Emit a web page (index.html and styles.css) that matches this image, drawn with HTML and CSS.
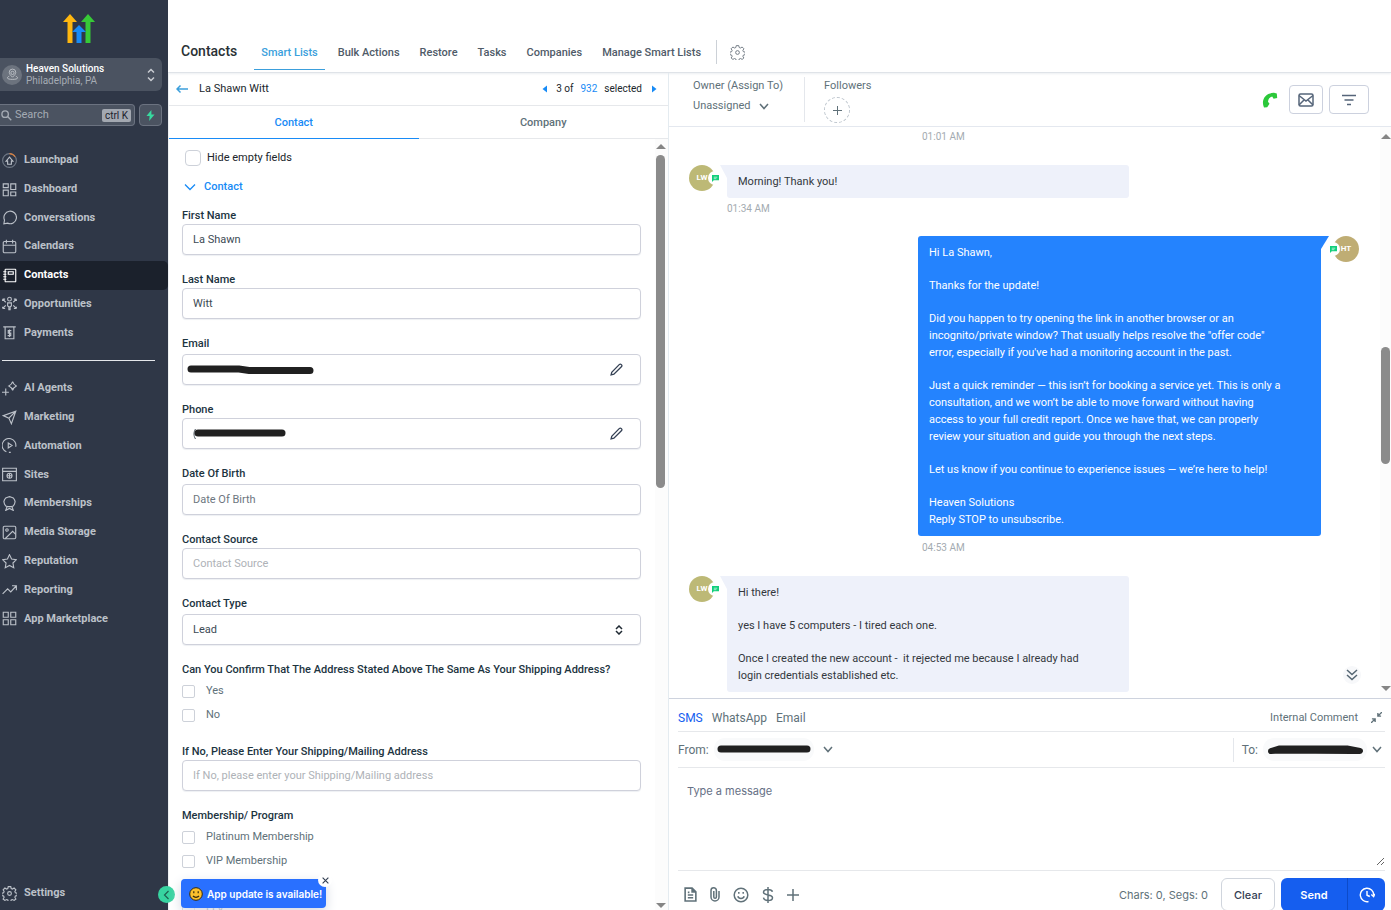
FILE: index.html
```html
<!DOCTYPE html>
<html lang="en">
<head>
<meta charset="utf-8">
<meta name="viewport" content="width=device-width, initial-scale=1">
<title>Contacts</title>
<link rel="stylesheet" href="styles.css">
</head>
<body>
<div class="app">
  <aside class="sidebar">
    <svg class="logo" viewBox="0 0 32 30" width="32" height="30" aria-hidden="true">
      <path fill="#ffb70f" d="M7 0 14 8H9.500V29H4.500V8H0z"/>
      <path fill="#37ca37" d="M25 0 32 8H27.500V29H22.500V8H18z"/>
      <path fill="#188bf6" d="M16 11 23 18H18.500V29H13.500V18H9z"/>
    </svg>
    <button class="location" type="button">
      <span class="location-pin">
        <svg class="line" viewBox="0 0 24 24" width="13" height="13"><circle cx="12" cy="9" r="3"/><path d="M12 17c4-4 6-6 6-9a6 6 0 0 0-12 0c0 3 2 5 6 9zM6 15c-6 3-4 6 6 6s12-3 6-6"/></svg>
      </span>
      <span class="location-text"><b>Heaven Solutions</b><span>Philadelphia, PA</span></span>
      <svg class="line location-sort" viewBox="0 0 10 14" width="10" height="14"><path d="M2 4.500 5 1.500 8 4.500M2 9.500 5 12.500 8 9.500"/></svg>
    </button>
    <div class="search-row">
      <div class="search">
        <svg class="line" viewBox="0 0 12 12" width="11" height="11"><circle cx="4.500" cy="4.500" r="3.500"/><path d="m7.200 7.200 4 4"/></svg>
        <input type="text" placeholder="Search" aria-label="Search">
        <kbd>ctrl K</kbd>
      </div>
      <button class="bolt" type="button" aria-label="Quick actions"><svg viewBox="0 0 10 12" width="9" height="11"><path fill="#37d99f" d="M6 0 0.500 6.500H4L3.500 12 9.500 5H6z"/></svg></button>
    </div>
    <nav class="menu" aria-label="Main">
      <ul class="menu-list menu-primary">
        <li><a href="#"><svg class="line" viewBox="0 0 24 24"><circle cx="12" cy="12" r="11" stroke="#6f7886"/><path stroke="#d97f3d" d="M12 1a11 11 0 0 1 9 5"/><path d="M9 18v-5H6.500L12 6.500 17.500 13H15v5z"/></svg>Launchpad</a></li>
        <li><a href="#"><svg class="line" viewBox="0 0 24 24"><path d="M2 3h8v6H2zM14 3h8v9h-8zM2 13h8v9H2zM14 16h8v6h-8z"/></svg>Dashboard</a></li>
        <li><a href="#"><svg class="line" viewBox="0 0 24 24"><path d="M3 22l1-6a10 10 0 1 1 5 5z"/></svg>Conversations</a></li>
        <li><a href="#"><svg class="line" viewBox="0 0 24 24"><rect x="2" y="4" width="20" height="18" rx="2"/><path d="M2 10h20M7 1v6M17 1v6"/></svg>Calendars</a></li>
        <li><a class="active" href="#"><svg class="line" viewBox="0 0 24 24"><rect x="5" y="2" width="17" height="20" rx="1"/><path d="M10 6h8v4h-8zM2 6h5M2 10h5M2 14h5M2 18h5"/></svg>Contacts</a></li>
        <li><a href="#"><svg class="line" viewBox="0 0 24 24"><circle cx="12" cy="5" r="3"/><path d="M9 11h6v5l-2 1v5h-2v-5l-2-1zM1 5l5 5M1 5h4M1 5v3M23 5l-5 5M23 5h-4M23 5v3M1 20l5-5M1 20h4M1 20v-3M23 20l-5-5M23 20h-4M23 20v-3"/></svg>Opportunities</a></li>
        <li><a href="#"><svg class="line" viewBox="0 0 24 24"><path d="M2 3h20M5 3v19h14V3M15 9h-5v4h4v4H9M12 7v12"/></svg>Payments</a></li>
      </ul>
      <hr>
      <ul class="menu-list menu-secondary">
        <li><a href="#"><svg class="line" viewBox="0 0 24 24"><path d="M17 1c1 4 2 5 6 7-4 2-5 3-6 7-1-4-2-5-6-7 4-2 5-3 6-7zM6 12v11M0 18h11"/></svg>AI Agents</a></li>
        <li><a href="#"><svg class="line" viewBox="0 0 24 24"><path d="M22 2 15 22l-4-9-9-4zM22 2 11 13"/></svg>Marketing</a></li>
        <li><a href="#"><svg class="line" viewBox="0 0 24 24"><path d="M7 22A11 11 0 1 1 22 14M11 23h3M10 8l6 4-6 4z"/></svg>Automation</a></li>
        <li><a href="#"><svg class="line" viewBox="0 0 24 24"><path d="M1 2h22v20H1zM1 7h22"/><circle cx="12" cy="14" r="4"/><path d="M12 10v8M8 14h8"/></svg>Sites</a></li>
        <li><a href="#"><svg class="line" viewBox="0 0 24 24"><path d="m12 1 3 1 3 1 2 3 1 3-1 4-2 3-3 1h-6l-3-1-2-3-1-4 1-3 2-3 3-1zM8 17l-2 6 6-3 6 3-2-6"/></svg>Memberships</a></li>
        <li><a href="#"><svg class="line" viewBox="0 0 24 24"><rect x="2" y="2" width="20" height="20" rx="2"/><circle cx="8" cy="8" r="2"/><path d="m5 22 12-12 5 5"/></svg>Media Storage</a></li>
        <li><a href="#"><svg class="line" viewBox="0 0 24 24"><path d="m12 1 3.300 7 7.700 1-5.500 5.400 1.300 7.600-6.800-3.600L5.200 22l1.300-7.600L1 9l7.700-1z"/></svg>Reputation</a></li>
        <li><a href="#"><svg class="line" viewBox="0 0 24 24"><path d="m1 19 8-8 5 5 9-10M16 6h7v7"/></svg>Reporting</a></li>
        <li><a href="#"><svg class="line" viewBox="0 0 24 24"><path d="M2 2h8v8H2zM14 2h8v8h-8zM2 14h8v8H2zM14 14h8v8h-8z"/></svg>App Marketplace</a></li>
      </ul>
    </nav>
    <a class="settings" href="#"><svg class="line" viewBox="0 0 24 24"><circle cx="12" cy="12" r="3"/><path d="M10 1h4l.7 3 2 .8 2.700-1.600 2.800 2.800-1.600 2.700.8 2 3 .7v4l-3 .7-.8 2 1.600 2.700-2.800 2.200-2.700-1.400-2 .8-.7 2.600h-4l-.7-2.600-2-.8-2.700 1.400-2.800-2.200 1.600-2.700-.8-2-3-.7v-4l3-.7.8-2L1.800 6l2.800-2.800 2.700 1.600 2-.8z"/></svg>Settings</a>
    <button class="collapse" type="button" aria-label="Collapse menu"><svg viewBox="0 0 10 10" width="10" height="10"><path d="M6.500 1 2.500 5l4 4" fill="none" stroke="#1d5f50" stroke-width="1.200"/></svg></button>
  </aside>

  <main class="main">
    <header class="topbar">
      <h1>Contacts</h1>
      <nav class="topnav" aria-label="Contacts">
        <a class="active" href="#">Smart Lists</a>
        <a href="#">Bulk Actions</a>
        <a href="#">Restore</a>
        <a href="#">Tasks</a>
        <a href="#">Companies</a>
        <a href="#">Manage Smart Lists</a>
      </nav>
      <button class="gear" type="button" aria-label="Settings"><svg class="line" viewBox="0 0 24 24" width="15" height="15"><circle cx="12" cy="12" r="3"/><path d="M10 1h4l.7 3 2 .8 2.700-1.600 2.800 2.800-1.600 2.700.8 2 3 .7v4l-3 .7-.8 2 1.600 2.700-2.800 2.200-2.700-1.400-2 .8-.7 2.600h-4l-.7-2.600-2-.8-2.700 1.400-2.800-2.200 1.600-2.700-.8-2-3-.7v-4l3-.7.8-2L1.800 6l2.800-2.800 2.700 1.600 2-.8z"/></svg></button>
    </header>

    <div class="columns">
      <section class="contact">
        <div class="contact-head">
          <button type="button" class="plain back" aria-label="Back"><svg viewBox="0 0 12 10" width="12" height="10"><path d="M12 5H1.500M4.500 1.500 1 5l3.500 3.500" fill="none" stroke="#3b9fdc" stroke-width="1.500"/></svg></button>
          <h2>La Shawn Witt</h2>
          <div class="pager">
            <button type="button" class="plain" aria-label="Previous"><svg viewBox="0 0 5 8" width="5" height="8"><path fill="#188bf6" d="M5 0.500v7L0.500 4z"/></svg></button>
            <span>3 of</span><a href="#">932</a><span>selected</span>
            <button type="button" class="plain" aria-label="Next"><svg viewBox="0 0 5 8" width="5" height="8"><path fill="#188bf6" d="M0 0.500v7L4.500 4z"/></svg></button>
          </div>
        </div>
        <div class="tabs">
          <button type="button" class="active">Contact</button>
          <button type="button">Company</button>
        </div>
        <div class="scroller">
          <form class="form">
            <label class="hide-empty"><input type="checkbox">Hide empty fields</label>
            <button type="button" class="plain group-toggle"><svg viewBox="0 0 12 8" width="12" height="8"><path d="m1 1.500 5 5 5-5" fill="none" stroke="#188bf6" stroke-width="1.300"/></svg>Contact</button>

            <div class="field"><label for="first">First Name</label><input id="first" type="text" value="La Shawn"></div>
            <div class="field"><label for="last">Last Name</label><input id="last" type="text" value="Witt"></div>
            <div class="field roomy"><label for="email">Email</label>
              <div class="control"><input id="email" type="text">
                <svg class="mark" viewBox="0 0 130 14" width="130" height="14" aria-hidden="true"><path d="M7 6h48l10 1.500h61" fill="none" stroke="#202020" stroke-width="7" stroke-linecap="round"/></svg>
                <button type="button" class="plain edit" aria-label="Edit email"><svg class="line" viewBox="0 0 12 12" width="13" height="13"><path d="M1 11 1.600 8.500 8.500 1.500q1-1 2 0 1 1 0 2L3.600 10.300z"/></svg></button>
              </div>
            </div>
            <div class="field"><label for="phone">Phone</label>
              <div class="control"><input id="phone" type="text">
                <svg class="mark" viewBox="0 0 130 14" width="130" height="14" aria-hidden="true"><path d="M11.500 2c-2 3-2 7 0 10" fill="none" stroke="#47525c"/><path d="M14 6h84" fill="none" stroke="#202020" stroke-width="7" stroke-linecap="round"/></svg>
                <button type="button" class="plain edit" aria-label="Edit phone"><svg class="line" viewBox="0 0 12 12" width="13" height="13"><path d="M1 11 1.600 8.500 8.500 1.500q1-1 2 0 1 1 0 2L3.600 10.300z"/></svg></button>
              </div>
            </div>
            <div class="field roomy"><label for="dob">Date Of Birth</label><input id="dob" class="strong-hint" type="text" placeholder="Date Of Birth"></div>
            <div class="field"><label for="source">Contact Source</label><input id="source" type="text" placeholder="Contact Source"></div>
            <div class="field roomy"><label for="type">Contact Type</label>
              <div class="control"><select id="type"><option>Lead</option></select>
                <svg class="select-icon" viewBox="0 0 8 10" width="8" height="10" aria-hidden="true"><path d="M1 4 4 1l3 3M1 6l3 3 3-3" fill="none" stroke="#1f2933" stroke-width="1.500"/></svg>
              </div>
            </div>
            <fieldset class="field">
              <legend>Can You Confirm That The Address Stated Above The Same As Your Shipping Address?</legend>
              <label class="option"><input type="checkbox">Yes</label>
              <label class="option"><input type="checkbox">No</label>
            </fieldset>
            <div class="field"><label for="ship">If No, Please Enter Your Shipping/Mailing Address</label><input id="ship" type="text" placeholder="If No, please enter your Shipping/Mailing address"></div>
            <fieldset class="field">
              <legend>Membership/ Program</legend>
              <label class="option"><input type="checkbox">Platinum Membership</label>
              <label class="option"><input type="checkbox">VIP Membership</label>
              <label class="option"><input type="checkbox">Silver Membership</label>
              <label class="option"><input type="checkbox">LLV</label>
            </fieldset>
          </form>
          <div class="bar" aria-hidden="true"><i class="up"></i><div class="track"><span class="thumb thumb-form"></span></div><i class="down"></i></div>
        </div>
      </section>

      <section class="chat">
        <div class="chat-head">
          <div class="owner"><span>Owner (Assign To)</span>
            <button type="button" class="plain">Unassigned<svg class="line" viewBox="0 0 10 7" width="10" height="7"><path d="m1 1 4 4.500L9 1"/></svg></button></div>
          <div class="followers"><span>Followers</span>
            <button type="button" class="add" aria-label="Add follower"><svg class="line" viewBox="0 0 9 9" width="9" height="9"><path d="M4.500 0v9M0 4.500h9"/></svg></button></div>
          <div class="actions">
            <button type="button" class="plain" aria-label="Call"><svg viewBox="0 0 16 16" width="16" height="16"><path fill="#2bc83a" d="M2 15.500C-1.500 7.500 4 .5 12 .8l2.800.7.400 4.500-3.600.8-1.400-2.300C7.800 5.200 6.300 7 6 9.700l1.500 2.100-2.300 3.400z"/></svg></button>
            <button type="button" class="box" aria-label="Email"><svg class="line" viewBox="0 0 16 14" width="16" height="14"><rect x="1" y="1" width="14" height="12" rx="1.500"/><path d="m1 2.500 7 5.500 7-5.500M1 12l5-5M15 12l-5-5"/></svg></button>
            <button type="button" class="box wide" aria-label="Filter"><svg class="line" viewBox="0 0 14 12" width="14" height="12"><path d="M0 1.500h14M2.500 6h9M5 10.500h4"/></svg></button>
          </div>
        </div>

        <div class="scroller">
          <div class="messages">
            <time class="sent-time">01:01 AM</time>
            <div class="row incoming">
              <div class="avatar">LW<span class="badge"><svg viewBox="0 0 8 8" width="7" height="7"><path fill="#12cf7b" d="M0 0h8v6H2L0 8z"/><path stroke="#fff" d="M2 2.500h4M2 4.200h3" stroke-width=".7"/></svg></span></div>
              <div class="bubble"><p>Morning! Thank you!</p></div>
            </div>
            <time>01:34 AM</time>
            <div class="row outgoing">
              <div class="bubble">
                <p>Hi La Shawn,</p>
                <p>Thanks for the update!</p>
                <p>Did you happen to try opening the link in another browser or an incognito/private window? That usually helps resolve the "offer code" error, especially if you've had a monitoring account in the past.</p>
                <p>Just a quick reminder — this isn’t for booking a service yet. This is only a consultation, and we won’t be able to move forward without having access to your full credit report. Once we have that, we can properly review your situation and guide you through the next steps.</p>
                <p>Let us know if you continue to experience issues — we’re here to help!</p>
                <p>Heaven Solutions<br>Reply STOP to unsubscribe.</p>
              </div>
              <div class="avatar">HT<span class="badge"><svg viewBox="0 0 8 8" width="7" height="7"><path fill="#12cf7b" d="M0 0h8v6H2L0 8z"/><path stroke="#fff" d="M2 2.500h4M2 4.200h3" stroke-width=".7"/></svg></span></div>
            </div>
            <time class="sent-time">04:53 AM</time>
            <div class="row incoming">
              <div class="avatar">LW<span class="badge"><svg viewBox="0 0 8 8" width="7" height="7"><path fill="#12cf7b" d="M0 0h8v6H2L0 8z"/><path stroke="#fff" d="M2 2.500h4M2 4.200h3" stroke-width=".7"/></svg></span></div>
              <div class="bubble">
                <p>Hi there!</p>
                <p>yes I have 5 computers - I tired each one.</p>
                <p>Once I created the new account -&nbsp; it rejected me because I already had login credentials established etc.</p>
              </div>
            </div>
            <button type="button" class="jump" aria-label="Jump to latest"><svg class="line" viewBox="0 0 12 12" width="12" height="12"><path d="m1 1 5 4.500L11 1M1 6l5 4.500L11 6"/></svg></button>
          </div>
          <div class="bar bar-chat" aria-hidden="true"><i class="up"></i><div class="track"><span class="thumb thumb-chat"></span></div><i class="down"></i></div>
        </div>

        <div class="composer">
          <div class="channels">
            <button type="button" class="plain active">SMS</button>
            <button type="button" class="plain">WhatsApp</button>
            <button type="button" class="plain">Email</button>
            <button type="button" class="plain internal">Internal Comment</button>
            <button type="button" class="plain shrink" aria-label="Collapse composer"><svg class="line" viewBox="0 0 12 12" width="11" height="11"><path d="M12 0 7.500 4.500M7.500 1v3.500H11M0 12l4.500-4.500M1 7.500h3.500V11"/></svg></button>
          </div>
          <div class="route">
            <span>From:</span>
            <button type="button" class="plain number" aria-label="Sender number"><svg viewBox="0 0 96 14" width="96" height="14"><path d="M5 6h86" stroke="#202020" stroke-width="7" stroke-linecap="round"/></svg></button>
            <svg class="line" viewBox="0 0 10 7" width="10" height="7"><path d="m1 1 4 4.500L9 1"/></svg>
            <span class="to">To:</span>
            <button type="button" class="plain number" aria-label="Recipient number"><svg viewBox="0 0 100 14" width="100" height="14"><path d="M6 8 14 5.500h68L95 8h-8L14 7.500z" fill="none" stroke="#202020" stroke-width="6" stroke-linecap="round" stroke-linejoin="round"/></svg></button>
            <svg class="line last" viewBox="0 0 10 7" width="10" height="7"><path d="m1 1 4 4.500L9 1"/></svg>
          </div>
          <textarea placeholder="Type a message" aria-label="Message"></textarea>
          <div class="composer-foot">
            <button type="button" class="plain" aria-label="Templates"><svg class="line" viewBox="0 0 12 14" width="13" height="15"><path d="M1 1h6.500L11 4.500V13H1zM7.500 1v3.500H11M3.500 7.500h5M3.500 10h5M3.500 5h1.500"/></svg></button>
            <button type="button" class="plain" aria-label="Attach"><svg class="line" viewBox="0 0 10 15" width="10" height="15"><path d="M9 4v6a4 4 0 0 1-8 0V3.500a2.700 2.700 0 0 1 5.400 0V10a1.300 1.300 0 0 1-2.600 0V4"/></svg></button>
            <button type="button" class="plain" aria-label="Emoji"><svg class="line" viewBox="0 0 16 16" width="16" height="16"><circle cx="8" cy="8" r="6.800"/><path d="M4.800 9.200c1 3 5.400 3 6.400 0M5.800 5v1.800M10.200 5v1.800"/></svg></button>
            <button type="button" class="plain" aria-label="Payment"><svg class="line" viewBox="0 0 12 16" width="12" height="16"><path d="M10.500 4.800C10 3.300 8.300 2.500 6 2.500c-2.500 0-4.500 1-4.500 2.800C1.500 9 10.500 7 10.500 10.700c0 1.800-2 2.800-4.500 2.800s-4.200-1-4.500-2.800M6 0v16"/></svg></button>
            <button type="button" class="plain" aria-label="More"><svg class="line" viewBox="0 0 12 12" width="12" height="12"><path d="M6 0v12M0 6h12"/></svg></button>
            <span class="count">Chars: 0, Segs: 0</span>
            <button type="button" class="clear">Clear</button>
            <div class="send-group">
              <button type="button">Send</button>
              <button type="button" aria-label="Schedule"><svg viewBox="0 0 16 16" width="16" height="16"><path d="M9.500 14.500A6.700 6.700 0 1 1 14.700 8M8 4v4.200l2.800 1.300M12.300 7.500l2.300 2 1.200-2.600" fill="none" stroke="#fff" stroke-width="1.400"/></svg></button>
            </div>
          </div>
        </div>
      </section>
    </div>
  </main>

  <div class="toast" role="status">
    <svg viewBox="0 0 14 14" width="14" height="14" aria-hidden="true"><circle cx="7" cy="7" r="6.300" fill="#fbc02d" stroke="#33290d" stroke-width="1"/><path d="M4 9c1.500 1.700 4.500 1.700 6 0M4.800 4.300v2M9.200 4.300v2" fill="none" stroke="#33290d" stroke-width="1.200"/></svg>
    <span>App update is available!</span>
    <button type="button" aria-label="Dismiss"><svg viewBox="0 0 8 8" width="7" height="7"><path d="m.7.7 6.600 6.600M7.300.7.7 7.300" stroke="#344054" stroke-width="1.300"/></svg></button>
  </div>
</div>
</body>
</html>
```
FILE: styles.css
```css
* { box-sizing: border-box; }
body { margin: 0; background: #fff; color: #2a3135; font: 11px/16px Roboto, "Liberation Sans", sans-serif; }
button, input, select, textarea { font: inherit; color: inherit; }
button { cursor: pointer; }
a { color: inherit; text-decoration: none; }
h1, h2, p, ul { margin: 0; padding: 0; }
svg { flex: none; display: block; }
.line { fill: none; stroke: currentColor; stroke-width: 1.500; }
.plain { border: 0; background: none; padding: 0; display: flex; align-items: center; }

.app { display: flex; height: 100vh; overflow: hidden; position: relative; }

/* Sidebar */
.sidebar { width: 168px; flex: none; background: #2f3747; color: #bcc1c9; display: flex; flex-direction: column; position: relative; padding-top: 14px; }
.logo { margin-left: 63px; }
.location { display: flex; align-items: center; gap: 4px; width: 162px; height: 33px; margin-top: 14px; padding: 0 6px 0 2px; border: 0; border-radius: 0 6px 6px 0; background: #4b5361; color: #c9ccd2; text-align: left; }
.location-pin { width: 20px; height: 20px; border-radius: 50%; background: #6c737e; display: grid; place-items: center; }
.location-text { flex: 1; font-size: 10px; line-height: 12px; color: #a5abb4; }
.location-text b { display: block; color: #fff; font-weight: 500; }
.location-text span { display: block; }
.search-row { display: flex; gap: 4px; margin-top: 13px; }
.search { display: flex; align-items: center; width: 135px; height: 22px; padding: 0 3px 0 1px; gap: 3px; border: 1px solid #6b7280; border-left: 0; border-radius: 0 4px 4px 0; background: #4b5361; color: #a5abb4; }
.search input { flex: 1; min-width: 0; border: 0; padding: 0; background: none; }
.search input::placeholder { color: #a5abb4; opacity: 1; }
.search kbd { background: #a3a8b1; color: #1b212c; font: 10px/13px Roboto, sans-serif; padding: 0 3px; border-radius: 2px; }
.bolt { width: 23px; height: 22px; display: grid; place-items: center; padding: 0; border: 1px solid #6b7280; border-radius: 4px; background: #4b5361; }
.menu { margin-top: 20px; }
.menu hr { width: 153px; margin: 13px 0 13px 2px; border: 0; border-top: 1px solid #e5e7eb; }
.menu-list { list-style: none; display: grid; grid-auto-rows: 1fr; }
.menu-primary { height: 201px; }
.menu-secondary { height: 259px; }
.menu-list a, .settings { display: flex; align-items: center; gap: 7px; height: 100%; padding-left: 2px; font-weight: 700; }
.menu-list svg, .settings svg { width: 15px; height: 15px; stroke-width: 1.800; }
.menu-list a.active { background: #1b212c; color: #fff; border-radius: 0 5px 5px 0; }
.settings { height: 16px; margin-top: auto; margin-bottom: 9px; }
.collapse { position: absolute; right: -7px; bottom: 7px; z-index: 2; width: 17px; height: 17px; border: 0; border-radius: 50%; background: #37d3a0; padding: 0; display: grid; place-items: center; }

/* Top bar */
.main { flex: 1; min-width: 0; display: flex; flex-direction: column; }
.topbar { display: flex; align-items: flex-end; height: 73px; flex: none; padding-left: 13px; border-bottom: 1px solid #dfe3e8; box-shadow: 0 1px 2px #eceff2; }
.topbar h1 { font-size: 14px; line-height: 18px; font-weight: 500; margin: 0 17px 12px 0; }
.topnav { display: flex; gap: 6px; font-size: 11px; font-weight: 500; color: #4f5b68; }
.topnav a { padding: 0 7px 8px; margin-bottom: 2px; border-bottom: 1px solid transparent; }
.topnav a.active { color: #3b9fdc; border-color: #3b9fdc; }
.gear { border: 0; border-left: 1px solid #ccd1d7; background: none; color: #6d7680; margin: 0 0 8px 8px; padding: 4px 0 4px 13px; height: 24px; }

/* Contact panel */
.columns { flex: 1; min-height: 0; display: flex; }
.contact { width: 36%; min-width: 501px; max-width: 501px; flex: none; display: flex; flex-direction: column; border-left: 1px solid #edf0f3; border-right: 1px solid #e4ebf0; }
.contact-head { display: flex; align-items: center; height: 33px; flex: none; border-bottom: 1px solid #e6e8eb; padding: 0 11px 0 7px; }
.contact-head h2 { font-size: 11px; font-weight: 400; margin-left: 11px; color: #20262b; }
.pager { display: flex; align-items: center; gap: 7px; margin-left: auto; color: #20262b; font-size: 10px; }
.pager button:first-child { margin-right: 2px; }
.pager button:last-child { margin-left: 3px; }
.pager a { color: #188bf6; }
.tabs { display: flex; flex: none; height: 33px; }
.tabs button { flex: 1; border: 0; border-bottom: 1px solid #e6e8eb; background: none; color: #607179; font-weight: 500; padding: 1px 0 0; }
.tabs .active { color: #188bf6; border-color: #188bf6; }
.scroller { flex: 1; min-height: 0; display: flex; }
.form { flex: 1; min-width: 0; overflow: hidden; padding: 11px 14px 0 13px; }
.hide-empty { display: flex; align-items: center; gap: 6px; margin-left: 3px; color: #20262b; }
.form input[type="checkbox"] { appearance: none; width: 13px; height: 13px; flex: none; margin: 0; border: 1px solid #cdd1d9; border-radius: 2px; background: #fff; }
.form .hide-empty input { width: 16px; height: 16px; border-radius: 4px; }
.group-toggle { gap: 8px; margin: 13px 0 13px 2px; color: #188bf6; font-weight: 500; }
.field { display: flex; flex-direction: column; margin: 0 0 17px; border: 0; padding: 0; min-width: 0; }
.field.roomy { gap: 2px; }
.field > label, .field legend { padding: 0; font-weight: 500; color: #1c343f; line-height: 16px; }
.field legend { padding-bottom: 1px; }
.field input[type="text"], .field select { display: block; width: 100%; height: 31px; padding: 0 10px; border: 1px solid #cfd1db; border-radius: 4px; background: #fff; color: #3c4a54; box-shadow: 0 1px 1px #eef0f3; appearance: none; }
.field input::placeholder { color: #aeb2b7; opacity: 1; }
.field .strong-hint::placeholder { color: #6d7680; }
.control { position: relative; }
.mark { position: absolute; left: 2px; top: 9px; }
.edit { position: absolute; right: 18px; top: 9px; color: #344054; }
.edit svg { stroke-width: 1.200; }
.select-icon { position: absolute; right: 18px; top: 11px; }
.field > .option { display: flex; align-items: center; gap: 11px; height: 24px; font-weight: 400; color: #607179; }

/* Scroll bars */
.bar { width: 13px; flex: none; display: flex; flex-direction: column; align-items: center; padding: 5px 2px 2px 0; background: #fcfcfc; }
.bar .up, .bar .down { border: 5px solid transparent; height: 0; }
.bar .up { border-top: 0; border-bottom: 5px solid #858585; }
.bar .down { border-bottom: 0; border-top: 5px solid #858585; }
.track { flex: 1; width: 9px; padding-top: 6px; }
.bar-chat { width: 11px; padding: 7px 0; }
.bar-chat .track { padding-top: 208px; }
.thumb { display: block; border-radius: 5px; background: #8b8b8b; }
.thumb-form { height: 333px; }
.thumb-chat { height: 117px; }

/* Conversation */
.chat { flex: 1; min-width: 0; display: flex; flex-direction: column; color: #607179; }
.chat-head { display: flex; height: 54px; flex: none; padding: 4px 22px 4px 24px; border-bottom: 1px solid #e4e8ef; }
.owner { border-right: 1px solid #e4e7ec; padding: 1px 21px 0 0; }
.owner span, .followers span { display: block; }
.owner button { gap: 8px; margin-top: 4px; }
.followers { padding: 1px 0 0 19px; }
.add { display: grid; place-items: center; width: 26px; height: 26px; margin-top: 3px; border: 1px dashed #bcc4cc; border-radius: 50%; background: none; padding: 0; }
.add svg { stroke-width: 1; }
.actions { margin-left: auto; display: flex; align-items: center; gap: 6px; }
.actions .plain { margin-right: 5px; }
.box { display: grid; place-items: center; width: 34px; height: 29px; padding: 0; border: 1px solid #ccd1de; border-radius: 4px; background: #fff; color: #56657a; }
.box.wide { width: 40px; }
.messages { flex: 1; min-width: 0; overflow: hidden; padding: 2px 21px 0 20px; position: relative; }
time { display: block; margin-left: 38px; font-size: 10px; line-height: 16px; color: #a4abb1; }
.sent-time { width: 437px; margin-left: auto; }
.row { display: flex; }
.incoming { margin-top: 20px; margin-bottom: 3px; gap: 12px; }
.outgoing { margin-top: 19px; margin-bottom: 4px; justify-content: flex-end; gap: 12px; }
.avatar { position: relative; width: 26px; height: 26px; flex: none; border-radius: 50%; background: #bdb976; color: #fff; font-size: 8px; line-height: 25px; font-weight: 700; text-align: center; }
.outgoing .avatar { background: #bfad74; }
.badge { position: absolute; top: 6px; left: 19px; width: 14px; height: 14px; border-radius: 50%; background: #fff; display: grid; place-items: center; }
.outgoing .badge { left: -7px; }
.bubble { position: relative; display: grid; gap: 16px; width: 402px; padding: 8px 32px 8px 11px; border-radius: 0 3px 3px 3px; background: #eef1fa; color: #33383d; line-height: 17px; }
.bubble::before { content: ""; position: absolute; top: 0; left: -7px; width: 7px; height: 13px; background: inherit; clip-path: polygon(0 0, 100% 0, 100% 100%); }
.outgoing .bubble { width: 403px; background: #2483fe; color: #fff; border-radius: 3px 0 3px 3px; }
.outgoing .bubble::before { left: auto; right: -8px; width: 8px; clip-path: polygon(0 0, 100% 0, 0 100%); }
.jump { position: absolute; right: 19px; bottom: 14px; width: 18px; height: 18px; border: 0; border-radius: 50%; padding: 0; background: #f7f8fa; color: #566773; display: grid; place-items: center; }

/* Composer */
.composer { flex: none; border-top: 1px solid #ced3de; padding: 0 6px 0 9px; display: flex; flex-direction: column; font-size: 12px; }
.channels { display: flex; align-items: center; height: 33px; padding-top: 5px; gap: 9px; border-bottom: 1px solid #e6e8eb; }
.channels .active { color: #155eef; }
.channels .internal { margin-left: auto; font-size: 11px; }
.shrink { margin-left: 4px; margin-right: 3px; }
.route { display: flex; align-items: center; height: 36px; border-bottom: 1px solid #e6e8eb; gap: 5px; }
.route > svg { margin: 0 4px; }
.route > .last { margin: 0 3px 0 0; }
.number { height: 23px; padding: 0 2px; border-radius: 11px; background: #f9fafb; }
.to { margin-left: auto; padding: 4px 0 4px 8px; border-left: 1px solid #e4e7ec; }
.composer textarea { display: block; width: 100%; height: 98px; margin-bottom: 4px; padding: 15px 9px; border: 0; outline: 0; background: none; resize: vertical; font: 11px/16px Inter, sans-serif; }
.composer textarea::placeholder { color: #667085; opacity: 1; }
.composer-foot { display: flex; align-items: center; height: 40px; padding: 8px 0 0 6px; gap: 13px; border-top: 1px solid #e6e8eb; font: 11px/16px Inter, sans-serif; }
.count { margin-left: auto; }
.clear { width: 54px; height: 33px; padding: 0; border: 1px solid #d0d5dd; border-radius: 6px; background: #fff; color: #344054; font-weight: 500; }
.send-group { display: flex; height: 33px; margin-left: -7px; border-radius: 6px; overflow: hidden; }
.send-group button { border: 0; padding: 0; background: #155eef; color: #fff; font-weight: 600; width: 66px; }
.send-group button + button { width: 38px; border-left: 1px solid #0d4bc9; display: grid; place-items: center; }

/* Toast */
.toast { position: absolute; left: 181px; bottom: 2px; z-index: 3; display: flex; align-items: center; gap: 4px; height: 29px; padding: 0 4px 0 8px; border-radius: 4px; background: #2970ff; color: #fff; font: 600 10px/16px Inter, sans-serif; box-shadow: 0 4px 12px #d5d9e2; }
.toast button { position: absolute; top: -6px; right: -6px; width: 14px; height: 14px; border: 0; border-radius: 50%; padding: 0; background: #fff; display: grid; place-items: center; }
```
